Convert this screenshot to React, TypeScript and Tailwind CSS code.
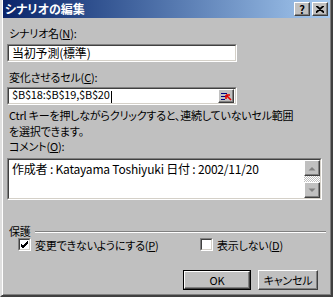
import React from "react";

// Excel「シナリオの編集」ダイアログ (Windows クラシック)

const font = "font-['Noto_Sans_CJK_JP','Noto_Sans',sans-serif] [font-feature-settings:'palt']";

const sunken =
  "border border-t-[#808080] border-l-[#808080] border-r-white border-b-white";
const sunkenInner =
  "border border-t-[#404040] border-l-[#404040] border-r-[#d4d0c8] border-b-[#d4d0c8]";
const raised =
  "border border-t-white border-l-white border-r-[#404040] border-b-[#404040] shadow-[inset_-1px_-1px_#808080]";

function TitleBtn({ children }: { children: React.ReactNode }) {
  return (
    <div
      className={`flex h-[14px] w-[16px] items-center justify-center bg-[#c0c0c0] ${raised} text-[11px] font-bold leading-none text-black`}
    >
      {children}
    </div>
  );
}

function Check({ on }: { on?: boolean }) {
  return (
    <div className={`h-[13px] w-[13px] shrink-0 ${sunken}`}>
      <div className={`h-full w-full bg-white ${sunkenInner}`}>
        {on && (
          <svg viewBox="0 0 9 9" className="block h-[9px] w-[9px]">
            <path d="M1 4 L3 6 L8 1 M1 5 L3 7 L8 2 M1 6 L3 8 L8 3" stroke="#000" strokeWidth="1" fill="none" />
          </svg>
        )}
      </div>
    </div>
  );
}

function Arrow({ up }: { up?: boolean }) {
  return (
    <div className={`flex h-[16px] w-[16px] items-center justify-center bg-[#c0c0c0] ${raised}`}>
      <svg viewBox="0 0 8 5" className="h-[5px] w-[8px]">
        <path d={up ? "M0.5 4.5 L4 1 L7.5 4.5 Z" : "M0.5 0.5 L4 4 L7.5 0.5 Z"} fill="#808080" />
      </svg>
    </div>
  );
}

export default function App() {
  return (
    <div
      className={`h-[297px] w-[333px] overflow-hidden bg-[#c0c0c0] ${font} text-[11px] tracking-[-0.2px] text-black border-x-2 border-b-2 border-l-[#dfdfdf] border-r-[#404040] border-b-[#404040] shadow-[inset_1px_0_#fff,inset_-1px_-1px_#808080]`}
    >
      {/* タイトルバー */}
      <div className="mx-px flex h-[18px] items-center justify-between bg-gradient-to-r from-[#0a246a] to-[#a6caf0] pl-[2px] pr-[2px]">
        <span className="text-[12px] font-bold leading-none tracking-normal text-white">シナリオの編集</span>
        <div className="flex gap-[2px]">
          <TitleBtn>?</TitleBtn>
          <TitleBtn>
            <svg viewBox="0 0 8 7" className="h-[7px] w-[8px]">
              <path d="M0 0 L8 7 M8 0 L0 7 M1 0 L8 6 M7 0 L0 6" stroke="#000" strokeWidth="1.2" />
            </svg>
          </TitleBtn>
        </div>
      </div>

      <div className="px-[5px]">
        <div className="mt-[8px] h-[14px] pl-[2px] leading-[14px]">
          シナリオ名(<span className="underline">N</span>):
        </div>
        <div className={`mt-[4px] h-[18px] w-[230px] ${sunken}`}>
          <div className={`flex h-full items-center bg-white pl-[3px] ${sunkenInner} text-[12px] leading-none`}>
            当初予測(標準)
          </div>
        </div>

        <div className="mt-[8px] h-[14px] pl-[2px] leading-[14px]">
          変化させるセル(<span className="underline">C</span>):
        </div>
        <div className={`mt-[3px] h-[18px] w-[230px] ${sunken}`}>
          <div className={`flex h-full items-center bg-white pl-[3px] pr-px ${sunkenInner} leading-none`}>
            <span className="flex-1 text-[11px]">
              $B$18:$B$19,$B$20<span className="ml-px inline-block h-[12px] w-px bg-black align-middle" />
            </span>
            <div className={`flex h-[14px] w-[16px] items-center justify-center bg-[#c0c0c0] ${raised}`}>
              <svg viewBox="0 0 12 9" className="h-[9px] w-[12px]">
                <path d="M1 1.5 H7 M1 4.5 H6 M1 7.5 H5" stroke="#000080" strokeWidth="1" />
                <path d="M6 3 L11 8 M6 3 V7 M6 3 H10" stroke="#e00000" strokeWidth="1.6" fill="none" />
              </svg>
            </div>
          </div>
        </div>

        <div className="mt-[2px] whitespace-nowrap pl-[2px] leading-[16px]">
          Ctrl キーを押しながらクリックすると、連続していないセル範囲
          <br />
          を選択できます。
        </div>

        <div className="h-[14px] pl-[2px] leading-[14px]">
          コメント(<span className="underline">O</span>):
        </div>
        <div className={`mt-[5px] h-[42px] w-[315px] ${sunken}`}>
          <div className={`flex h-full bg-white ${sunkenInner}`}>
            <div className="flex-1 pl-[3px] pt-[2px] text-[12px] leading-[14px]">
              作成者 : Katayama Toshiyuki 日付 : 2002/11/20
            </div>
            <div className="flex w-[16px] flex-col justify-between bg-[repeating-conic-gradient(#c0c0c0_0_25%,#fff_0_50%)] bg-[length:2px_2px]">
              <Arrow up />
              <Arrow />
            </div>
          </div>
        </div>

        {/* 保護グループ */}
        <div className="mt-[25px] flex h-[12px] items-center gap-[4px] pl-[2px]">
          <span className="leading-[12px]">保護</span>
          <div className="mt-px h-[2px] flex-1 border-t border-t-[#808080] border-b border-b-white" />
        </div>
        <div className="mt-[1px] flex h-[13px] items-center">
          <div className="flex w-[193px] items-center gap-[4px] pl-[11px]">
            <Check on />
            <span className="leading-[14px]">
              変更できないようにする(<span className="underline">P</span>)
            </span>
          </div>
          <div className="flex items-center gap-[4px]">
            <Check />
            <span className="leading-[14px]">
              表示しない(<span className="underline">D</span>)
            </span>
          </div>
        </div>

        <div className="mt-[19px] flex justify-end gap-[7px] pr-[8px]">
          <div className="h-[20px] w-[68px] border border-black">
            <div className={`flex h-full items-center justify-center bg-[#c0c0c0] ${raised} leading-none`}>
              OK
            </div>
          </div>
          <div className={`flex h-[20px] w-[60px] items-center justify-center bg-[#c0c0c0] ${raised} leading-none`}>
            キャンセル
          </div>
        </div>
      </div>
    </div>
  );
}
